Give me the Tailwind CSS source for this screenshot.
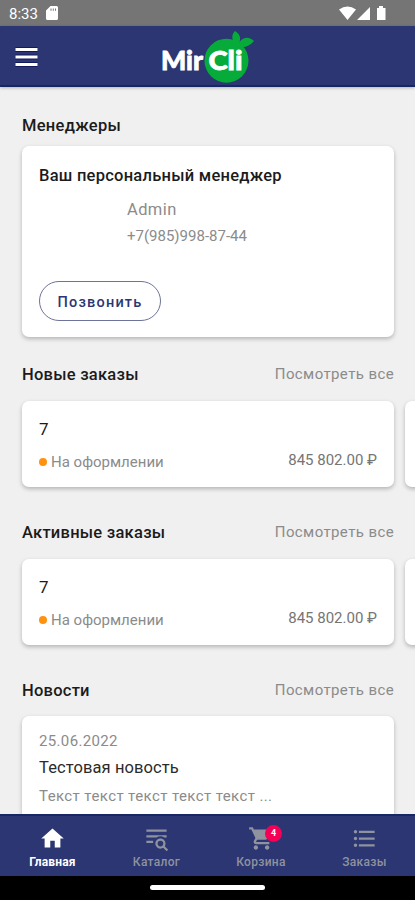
<!DOCTYPE html>
<html lang="ru">
<head>
<meta charset="utf-8">
<title>MirCli</title>
<script src="https://cdn.jsdelivr.net/npm/@tailwindcss/browser@4"></script>
</head>
<body class="bg-black">
<div class="w-[415px] h-[900px] flex flex-col overflow-hidden bg-[#f0f0f0] font-['Roboto',sans-serif] whitespace-nowrap">
  <div class="h-[26px] shrink-0 bg-[#757575] flex items-center text-white pl-[9px] pr-[28px]">
    <span class="text-[15px] leading-[26px] pt-[2px] w-[37px]">8:33</span>
    <svg class="w-[12px] h-[14px]" viewBox="0 0 12 14" fill="#fff"><path fill-rule="evenodd" d="M4.500 0H10.500Q12 0 12 1.500V12.500Q12 14 10.500 14H1.500Q0 14 0 12.500V4.500ZM4.500 2.500V4.800H5.500V2.500ZM6.800 2.500V4.800H7.800V2.500ZM9 2.500V4.800H10V2.500Z"/></svg>
    <svg class="ml-auto w-[48px] h-[16px]" viewBox="0 0 48 16" fill="#fff"><path d="M0 4.500Q8.500-1.500 17 4.500L8.500 15ZM18 15 31 2V15ZM38 3H40V1H44V3H46.500V15H38Z"/></svg>
  </div>
  <header class="h-[61px] shrink-0 bg-[#2b3672] border-b-2 border-[#182664] flex items-start pt-[5px] pl-[15px] relative shadow-[0_1px_3px_rgba(0,0,0,.25)]">
    <svg class="w-[23px] h-[21px] mt-[16px]" viewBox="0 0 23 21"><path d="M.5 2.500H22.500M.5 10H22.500M.5 17.500H22.500" stroke="#12195c" stroke-width="5"/><path d="M.5 2.500H22.500M.5 10H22.500M.5 17.500H22.500" stroke="#fff" stroke-width="2.800"/></svg>
    <svg class="ml-[122px] w-[96px] h-[54px]" viewBox="160 31 96 54">
      <circle cx="226.500" cy="60.700" r="22" fill="#07ab3a"/>
      <path d="M237 46C230 39 232 34 235 31C240 34 241 38 239.500 42C244 36 250 37 254 41C250 46 243 49 237 46Z" fill="#07ab3a"/>
      <text x="161" y="70" textLength="42" lengthAdjust="spacingAndGlyphs" fill="#fff" stroke="#fff" stroke-width=".8" class="font-['Lato',sans-serif] font-black text-[27px]">Mir</text>
      <text x="208.500" y="70" textLength="34" lengthAdjust="spacingAndGlyphs" fill="#fff" stroke="#fff" stroke-width=".8" class="font-['Lato',sans-serif] font-black text-[27px]">Cli</text>
    </svg>
  </header>
  <main class="h-[727px] shrink-0 overflow-hidden pl-[22px] text-[#8b8b8b]">
    <h2 class="mt-[29px] h-[20px] leading-[20px] text-[16.5px] tracking-[0.3px] font-medium text-[#1b1b1b]">Менеджеры</h2>
    <section class="mt-[10px] w-[372px] h-[191px] rounded-[7px] bg-white shadow-[0_2px_4px_rgba(0,0,0,.25)] pl-[17px] pt-[20px]">
      <h3 class="leading-[20px] text-[16.5px] tracking-[0.25px] font-medium text-[#1b1b1b]">Ваш персональный менеджер</h3>
      <p class="ml-[88px] mt-[14px] leading-[20px] text-[16.5px] tracking-[0.4px]">Admin</p>
      <p class="ml-[88px] mt-[6px] leading-[20px] text-[15px]">+7(985)998-87-44</p>
      <button class="mt-[35px] block w-[122px] h-[40px] rounded-full border border-[#6e7399] text-[#2b3674] text-[14.5px] font-medium tracking-[1.2px] pt-[4px]">Позвонить</button>
    </section>
    <div class="mt-[28px] w-[372px] h-[20px] flex justify-between leading-[20px]"><h2 class="text-[16.5px] tracking-[0.25px] font-medium text-[#1b1b1b]">Новые заказы</h2><a class="-mt-[1px] text-[15px] tracking-[0.4px]">Посмотреть все</a></div>
    <div class="mt-[16px] flex gap-[11px]">
      <section class="w-[372px] h-[86px] shrink-0 rounded-[7px] bg-white shadow-[0_2px_4px_rgba(0,0,0,.25)] px-[17px] pt-[17px]">
        <h3 class="leading-[22px] text-[17px] text-[#1b1b1b]">7</h3>
        <div class="mt-[12px] flex items-center leading-[20px] text-[15px]"><i class="w-[8px] h-[8px] rounded-full bg-[#ff9210] mr-[4px]"></i><span>На оформлении</span><span class="ml-auto -mt-[4px] text-[#757575]">845 802.00 ₽</span></div>
      </section>
      <section class="w-[372px] h-[86px] shrink-0 rounded-[7px] bg-white shadow-[0_2px_4px_rgba(0,0,0,.25)]"></section>
    </div>
    <div class="mt-[36px] w-[372px] h-[20px] flex justify-between leading-[20px]"><h2 class="text-[16.5px] tracking-[0.25px] font-medium text-[#1b1b1b]">Активные заказы</h2><a class="-mt-[1px] text-[15px] tracking-[0.4px]">Посмотреть все</a></div>
    <div class="mt-[16px] flex gap-[11px]">
      <section class="w-[372px] h-[86px] shrink-0 rounded-[7px] bg-white shadow-[0_2px_4px_rgba(0,0,0,.25)] px-[17px] pt-[17px]">
        <h3 class="leading-[22px] text-[17px] text-[#1b1b1b]">7</h3>
        <div class="mt-[12px] flex items-center leading-[20px] text-[15px]"><i class="w-[8px] h-[8px] rounded-full bg-[#ff9210] mr-[4px]"></i><span>На оформлении</span><span class="ml-auto -mt-[4px] text-[#757575]">845 802.00 ₽</span></div>
      </section>
      <section class="w-[372px] h-[86px] shrink-0 rounded-[7px] bg-white shadow-[0_2px_4px_rgba(0,0,0,.25)]"></section>
    </div>
    <div class="mt-[36px] w-[372px] h-[20px] flex justify-between leading-[20px]"><h2 class="text-[16.5px] tracking-[0.25px] font-medium text-[#1b1b1b]">Новости</h2><a class="-mt-[1px] text-[15px] tracking-[0.4px]">Посмотреть все</a></div>
    <section class="mt-[15px] w-[372px] h-[130px] rounded-[7px] bg-white shadow-[0_2px_4px_rgba(0,0,0,.25)] pl-[17px] pt-[15px]">
      <p class="leading-[20px] text-[15px] tracking-[0.35px]">25.06.2022</p>
      <h3 class="mt-[7px] leading-[20px] text-[16.5px] tracking-[0.1px] text-[#2b2b2b]">Тестовая новость</h3>
      <p class="mt-[8px] leading-[20px] text-[15px] tracking-[0.4px]">Текст текст текст текст текст ...</p>
    </section>
  </main>
  <nav class="h-[62px] shrink-0 bg-[#2b3672] border-t-2 border-[#182664] flex text-[#8f929f] text-[12px] leading-[14px] font-medium">
    <a class="w-[105px] shrink-0 flex flex-col items-center pt-[9px] text-white font-bold"><svg class="w-[27px] h-[27px] mb-[3px]" viewBox="0 0 24 24" fill="currentColor"><path d="M10 20v-6h4v6h5v-8h3L12 3 2 12h3v8z"/></svg><span class="tracking-[0.15px]">Главная</span></a>
    <a class="w-[103px] shrink-0 flex flex-col items-center pt-[9px]"><svg class="w-[27px] h-[27px] mb-[3px]" viewBox="0 0 24 24" fill="currentColor"><path d="M19.310 18.900L22.390 22L21 23.390L17.880 20.320C17.190 20.750 16.370 21 15.500 21C13 21 11 19 11 16.500C11 14 13 12 15.500 12C18 12 20 14 20 16.500C20 17.380 19.750 18.210 19.310 18.900M15.500 19A2.500 2.500 0 0 0 18 16.500A2.500 2.500 0 0 0 15.500 14A2.500 2.500 0 0 0 13 16.500A2.500 2.500 0 0 0 15.500 19M21 4V6H3V4H21M3 16V14H9V16H3M3 11V9H21V11H18.970C17.960 10.370 16.770 10 15.500 10C14.230 10 13.040 10.370 12.030 11H3Z"/></svg><span class="tracking-[0.3px]">Каталог</span></a>
    <a class="w-[106px] shrink-0 flex flex-col items-center pt-[9px] relative"><svg class="w-[27px] h-[27px] mb-[3px]" viewBox="0 0 24 24" fill="currentColor"><path d="M7 18c-1.100 0-1.990.9-1.990 2S5.900 22 7 22s2-.9 2-2-.9-2-2-2zM1 2v2h2l3.600 7.590-1.350 2.450c-.16.28-.25.61-.25.960 0 1.100.9 2 2 2h12v-2H7.420c-.14 0-.25-.11-.25-.25l.03-.12.9-1.630h7.450c.75 0 1.410-.41 1.750-1.030l3.580-6.490c.08-.14.12-.31.12-.48 0-.55-.45-1-1-1H5.210l-.94-2H1zm16 16c-1.100 0-1.990.9-1.990 2s.89 2 1.990 2 2-.9 2-2-.9-2-2-2z"/></svg><span class="tracking-[0.3px]">Корзина</span>
      <b class="absolute left-[57px] top-[9px] w-[17px] h-[17px] rounded-full bg-[#f50057] text-white text-[9px] leading-[17px] text-center">4</b></a>
    <a class="w-[101px] shrink-0 flex flex-col items-center pt-[9px]"><svg class="w-[27px] h-[27px] mb-[3px]" viewBox="0 0 24 24" fill="currentColor"><path d="M4 10.500c-.83 0-1.500.67-1.500 1.500s.67 1.500 1.500 1.500 1.500-.67 1.500-1.500-.67-1.500-1.500-1.500zm0-6c-.83 0-1.500.67-1.500 1.500S3.170 7.500 4 7.500 5.500 6.830 5.500 6 4.830 4.500 4 4.500zm0 12c-.83 0-1.500.68-1.500 1.500s.68 1.500 1.500 1.500 1.500-.68 1.500-1.500-.67-1.500-1.500-1.500zM7 19h14v-2H7v2zm0-6h14v-2H7v2zm0-8v2h14V5H7z"/></svg><span class="tracking-[0.3px]">Заказы</span></a>
  </nav>
  <div class="h-[24px] shrink-0 bg-black flex justify-center pt-[9px]"><div class="w-[115px] h-[5px] rounded-full bg-white"></div></div>
</div>
</body>
</html>
